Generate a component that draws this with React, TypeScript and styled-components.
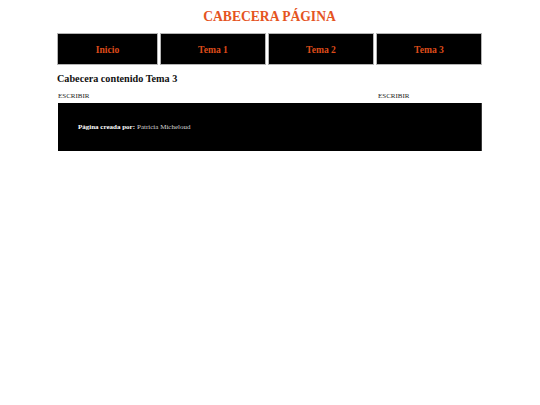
import React from 'react';
import styled, { createGlobalStyle } from 'styled-components';

const GlobalStyle = createGlobalStyle`
  html, body {
    margin: 0;
    padding: 0;
    background: #ffffff;
  }
  body {
    font-family: 'Liberation Serif', 'Times New Roman', serif;
  }
`;

const Page = styled.div`
  width: 425px;
  margin: 0 0 0 57px;
  padding-top: 8px;
`;

const Title = styled.h1`
  margin: 0 0 7px;
  height: 18px;
  line-height: 18px;
  text-align: center;
  font-size: 13.6px;
  font-weight: bold;
  color: #e5541f;
`;

const Nav = styled.nav`
  display: grid;
  grid-template-columns: 101px repeat(3, 1fr);
  gap: 2px;
`;

const NavItem = styled.a`
  display: flex;
  align-items: center;
  justify-content: center;
  height: 32px;
  box-sizing: border-box;
  background: #000000;
  border: 1px solid #b4b4b4;
  color: #dd4b1a;
  font-size: 9.6px;
  font-weight: bold;
  text-decoration: none;
`;

const SectionTitle = styled.h2`
  margin: 7px 0 0;
  height: 14px;
  line-height: 14px;
  font-size: 10.2px;
  font-weight: bold;
  color: #111111;
`;

const Content = styled.div`
  display: grid;
  grid-template-columns: 1fr 104px;
  gap: 2px;
  margin-top: 5px;
  padding-left: 1px;
`;

const Write = styled.p`
  margin: 0;
  height: 11px;
  line-height: 11px;
  font-size: 7px;
  color: #222222;
`;

const Footer = styled.footer`
  display: flex;
  align-items: center;
  height: 48px;
  margin-top: 1px;
  margin-left: 1px;
  padding-left: 20px;
  box-sizing: border-box;
  background: #000000;
  border-right: 1px solid #3a3a3a;
  font-size: 7px;
  color: #d6d6d6;
`;

const Author = styled.strong`
  color: #ffffff;
  margin-right: 2px;
`;

const tabs = ['Inicio', 'Tema 1', 'Tema 2', 'Tema 3'];

const App: React.FC = () => {
  return (
    <>
      <GlobalStyle />
      <Page>
        <Title>CABECERA PÁGINA</Title>
        <Nav>
          {tabs.map((tab) => (
            <NavItem key={tab} href="#">
              {tab}
            </NavItem>
          ))}
        </Nav>
        <SectionTitle>Cabecera contenido Tema 3</SectionTitle>
        <Content>
          <Write>ESCRIBIR</Write>
          <Write>ESCRIBIR</Write>
        </Content>
        <Footer>
          <Author>Página creada por:</Author> Patricia Micheloud
        </Footer>
      </Page>
    </>
  );
};

export default App;
